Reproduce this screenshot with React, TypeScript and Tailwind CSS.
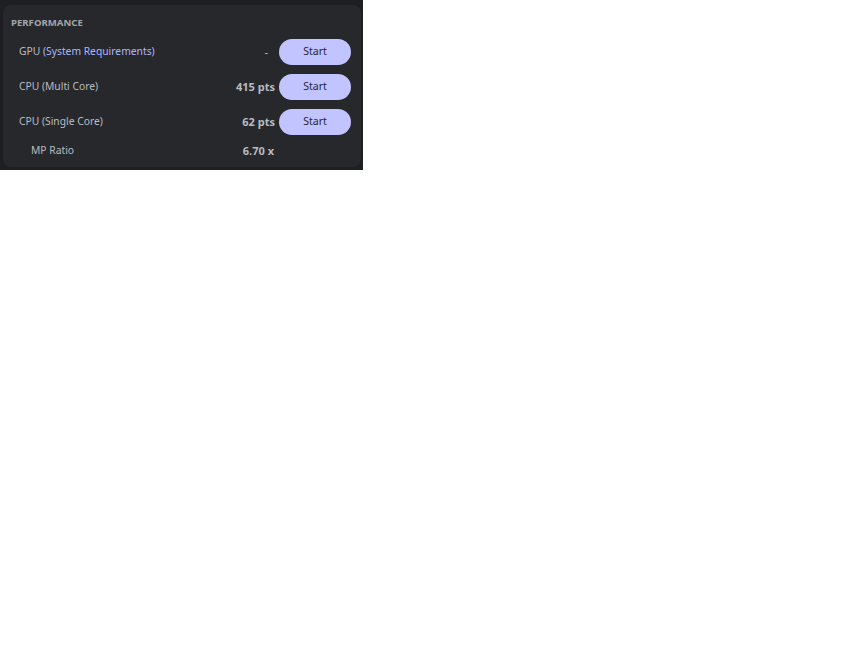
import React from "react";

const rows = [
  { label: "GPU", link: "(System Requirements)", value: "-", bold: false },
  { label: "CPU (Multi Core)", value: "415 pts", bold: true },
  { label: "CPU (Single Core)", value: "62 pts", bold: true },
];

export default function App() {
  return (
    <div className="w-[363px] h-[170px] bg-[#1e1f22] pl-[3px] pr-[2px] pt-[5px] pb-[3px]" style={{ fontFamily: '"Noto Sans", "Open Sans", sans-serif' }}>
      <div className="h-full rounded-lg bg-[#27282c] pl-2 pr-[10px] pt-[11px]">
        <div className="text-[9.6px] font-bold text-[#a3a5ab] leading-[14px]">PERFORMANCE</div>
        <div className="mt-[9px] flex flex-col gap-[9px]">
          {rows.map((r) => (
            <div key={r.label} className="flex items-center h-[26px]">
              <div className="pl-2 flex-1 text-[10.3px] text-[#b9bbc1]">
                {r.label}
                {r.link && <span className="text-[#a9b6ff]"> {r.link}</span>}
              </div>
              <div className={`text-[11px] text-[#b9bbc1] ${r.bold ? "font-bold" : "pr-[7px]"}`}>{r.value}</div>
              <button className="ml-1 w-[72px] h-[26px] rounded-full bg-[#c1c4ff] text-[10.5px] text-[#23253a]">Start</button>
            </div>
          ))}
          <div className="flex items-center h-[10px] mt-[2px]">
            <div className="pl-5 flex-1 text-[10.3px] text-[#b9bbc1]">MP Ratio</div>
            <div className="text-[11px] font-bold text-[#b9bbc1] mr-[77px]">6.70 x</div>
          </div>
        </div>
      </div>
    </div>
  );
}
